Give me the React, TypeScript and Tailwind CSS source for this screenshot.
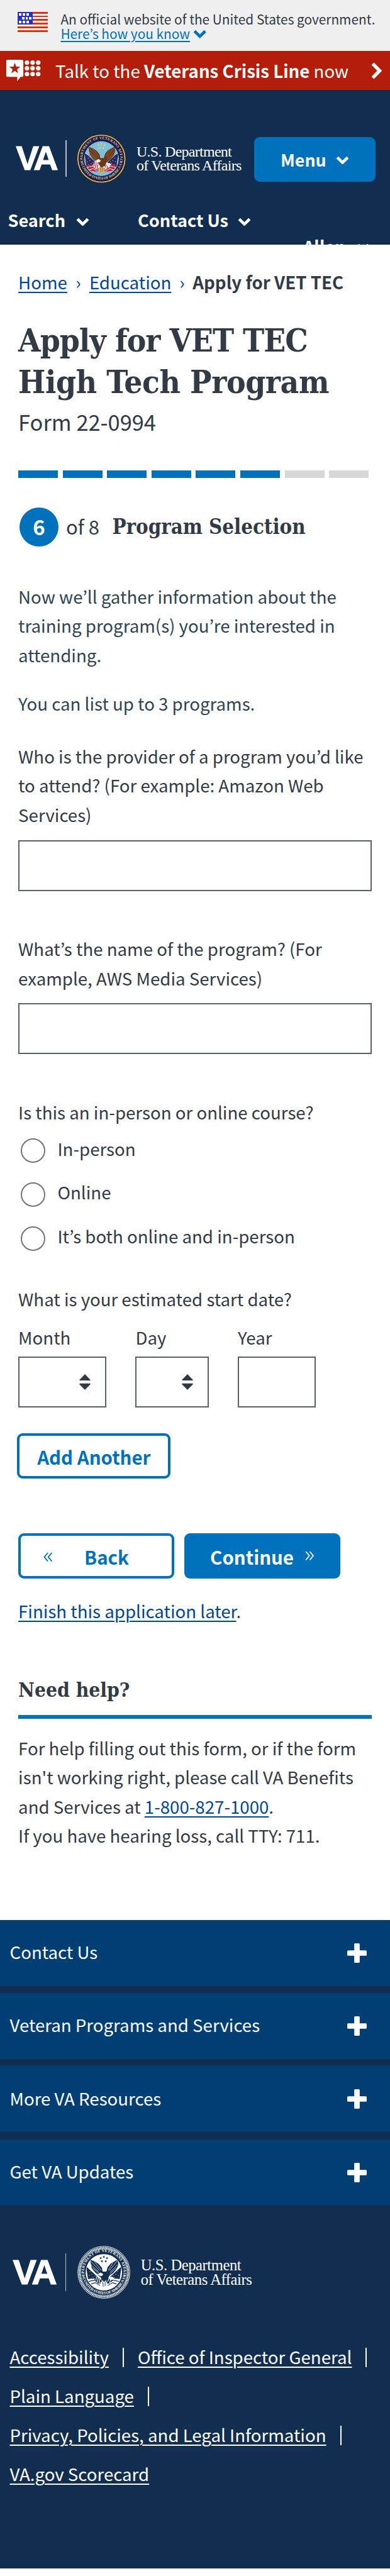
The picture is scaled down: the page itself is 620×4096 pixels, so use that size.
import { useId, type ReactNode } from "react";

const BODY = "text-[27.65px] leading-[46.5px]";

function Star({ cx, cy, r, fill }: { cx: number; cy: number; r: number; fill: string }) {
  const pts = Array.from({ length: 10 }, (_, i) => {
    const a = (Math.PI / 5) * i - Math.PI / 2;
    const rr = i % 2 ? r * 0.4 : r;
    return `${(cx + rr * Math.cos(a)).toFixed(2)},${(cy + rr * Math.sin(a)).toFixed(2)}`;
  }).join(" ");
  return <polygon points={pts} fill={fill} />;
}

function Flag() {
  return (
    <svg viewBox="0 0 50 34" className="h-[32.5px] w-[48px] shrink-0" shapeRendering="crispEdges">
      <rect width="50" height="34" fill="#fff" />
      {[0, 6, 12, 18, 24.4, 30.8].map((y) => (
        <rect key={y} y={y} width="50" height="2.8" fill="#ee2b0c" />
      ))}
      <rect width="25.5" height="21.3" fill="#2230c3" />
      {[
        [2.5, 2.6], [8.6, 2.6], [14.8, 2.6],
        [7, 8.7], [13, 8.7], [19.2, 8.7],
        [2.5, 14.8], [8.6, 14.8], [14.8, 14.8],
      ].map(([x, y]) => (
        <rect key={`${x}-${y}`} x={x} y={y} width="4" height="3.6" fill="#fff" />
      ))}
    </svg>
  );
}

function CrisisIcon() {
  return (
    <svg viewBox="0 0 57 36" className="h-[34.9px] w-[55.2px] shrink-0">
      <path d="M2 0H26a2 2 0 0 1 2 2V26a2 2 0 0 1-2 2h-2.500L18 35V28H2a2 2 0 0 1-2-2V2a2 2 0 0 1 2-2Z" fill="#fff" />
      <Star cx={14} cy={14.5} r={9.5} fill="#b31d09" />
      {[4.7, 14, 23.5].map((y) =>
        [34, 43.2, 52.4].map((x) => <circle key={`${x}-${y}`} cx={x} cy={y} r="3.7" fill="#fff" />),
      )}
    </svg>
  );
}

function Chevron({ className }: { className: string }) {
  return (
    <svg viewBox="0 0 22 14" className={className}>
      <path d="M2.300 2.400 11 10.900 19.700 2.400" fill="none" stroke="currentColor" strokeWidth="4.8" />
    </svg>
  );
}

function Seal({ mono, className }: { mono?: boolean; className: string }) {
  const id = useId();
  const ink = "#112e51";
  const c = mono
    ? { ring: ink, sky: "#fff", text: "#fff", wing: ink, wingLine: "#fff", star: ink, flag: ink, stripe: "#fff", stripeB: ink, head: "#fff", talon: "#fff", pole: "#fff" }
    : { ring: "#1d1a4b", sky: "#7fbfdc", text: "#d9cf9a", wing: "#6b3a1c", wingLine: "#9a6236", star: "#f4d34a", flag: "#28275c", stripe: "#c4202f", stripeB: "#f4eef0", head: "#f6f4f2", talon: "#eebf2a", pole: "#dfe8f0" };
  return (
    <svg viewBox="0 0 84 84" className={className}>
      <defs>
        <path id={`${id}t`} d="M13.800 54.500A31.300 31.300 0 1 1 70.200 54.500" />
        <path id={`${id}b`} d="M8.800 52.500A34.900 34.900 0 0 0 75.200 52.500" />
        <clipPath id={`${id}c`}><circle cx="42" cy="42" r="28.500" /></clipPath>
      </defs>
      <circle cx="42" cy="42" r="41" fill={c.ring} />
      {mono ? (
        <>
          <circle cx="42" cy="42" r="41.300" fill="none" stroke="#fff" strokeWidth="0.9" />
          <circle cx="42" cy="42" r="38.700" fill="none" stroke="#fff" strokeWidth="2.800" strokeDasharray="1.600 0.850" />
          <circle cx="42" cy="42" r="36.900" fill="none" stroke="#fff" strokeWidth="0.6" />
        </>
      ) : (
        <circle cx="42" cy="42" r="39" fill="none" stroke="#dcb23c" strokeWidth="2" />
      )}
      <circle cx="42" cy="42" r="28.900" fill={c.sky} />
      <g fontFamily="Liberation Serif, serif" fontWeight="700" fontSize="6.100" fill={c.text}>
        <text><textPath href={`#${id}t`} startOffset="50%" textAnchor="middle" textLength="122">DEPARTMENT OF VETERANS AFFAIRS</textPath></text>
        <text><textPath href={`#${id}b`} startOffset="50%" textAnchor="middle" textLength="82">UNITED STATES OF AMERICA</textPath></text>
      </g>
      <circle cx="9.300" cy="48" r="0.9" fill={c.text} />
      <circle cx="74.700" cy="48" r="0.9" fill={c.text} />
      <g clipPath={`url(#${id}c)`}>
        <path d="M14 33 20 36 38 51 36 60 24 57 17 54Z" fill={c.flag} />
        <path d="M70 33 64 36 47 51 49 60 60 57 67 54Z" fill={c.flag} />
        <path d="M15 53 27 52 38 58 36 64 24 62Z M69 53 57 52 46 58 48 64 60 62Z" fill={c.stripe} />
        <path d="M18 56.500 27 54.500 37 60M22 60.500 28 58.500 36 63M66 56.500 57 54.500 47 60M62 60.500 56 58.500 48 63" stroke={c.stripeB} strokeWidth="1.100" fill="none" />
        <path d="M31 46 27 54 33 60 40 56 38 48Z M52 48 56 55 50 60 44 56 46 49Z" fill={mono ? ink : "#f1ecee"} />
        <path d="M31.500 47 29 55M34 48 31.500 58M36.500 49 34.500 59M51 50 48 57M53.500 51 51 59" stroke={c.stripe} strokeWidth="1.200" />
        <path d="M15 32 38 53M69 32 47 52" stroke={c.pole} strokeWidth={mono ? 2.4 : 0.8} />
        {[[20, 41], [23, 45], [19, 47], [25, 50], [21, 52], [28, 48], [64, 41], [61, 45], [65, 47], [59, 50], [63, 52], [57, 47]].map(([x, y]) => (
          <circle key={`${x}-${y}`} cx={x} cy={y} r="0.65" fill="#e9edf4" />
        ))}
        <path d="M20 22 28 25 34 29 39 35 40 41 46 41 48 34 53 28 64 22 65 30 62 37 57 43 51 47 48 54 42 57 38 52 36 47 29 43 23 36Z" fill={c.wing} />
        <path d="M21 24 35 39M20.500 29 34 42M24 35 35 44M27 25 38 39M63 24 51 39M64.500 29 52 42M62 35 52 44M56 27 49 39" stroke={c.wingLine} strokeWidth={mono ? 0.7 : 0.9} />
        <path d="M33 45 37 42.500 41 45 39 48 35 47.500Z" fill={c.head} />
        <path d="M49 50 55 49 59 52 53 55Z" fill={c.head} />
        <path d="M38 54 42 58 46 54 45 61 47 64 42 66 38 64 39.500 60Z" fill={c.talon} />
        <path d="M40.500 57 41 65M44 57 44 64" stroke={mono ? ink : "#b3261e"} strokeWidth="0.9" />
      </g>
      {[[42, 17.5], [37, 19.5], [47, 19.5], [39, 24.5], [45, 24.5]].map(([x, y]) => (
        <Star key={`${x}-${y}`} cx={x} cy={y} r={2.3} fill={c.star} />
      ))}
    </svg>
  );
}

function NavItem({ children, w, gap }: { children: ReactNode; w: string; gap: string }) {
  return (
    <div className={`flex h-[40px] items-center text-[27.1px] font-bold text-white ${w} ${gap}`}>
      <span className="pt-[2px]">{children}</span>
      <Chevron className="mt-[6px] h-[13.5px] w-[21px]" />
    </div>
  );
}

function UpDown() {
  return (
    <svg viewBox="0 0 18 26" className="h-[25px] w-[18px]" fill="#323a45">
      <path d="M9 0 18 9.300V10.500H0V9.300Z M9 26 18 17V15.300H0V17Z" />
    </svg>
  );
}

function DateField({ label, box, arrows }: { label: string; box: string; arrows?: boolean }) {
  return (
    <label className="flex flex-col">
      <span className={BODY}>{label}</span>
      <span className={`mt-[7.4px] flex h-[81.2px] items-center justify-end border-2 border-[#5b616b] pr-[22.5px] ${box}`}>
        {arrows && <UpDown />}
      </span>
    </label>
  );
}

function Plus() {
  return (
    <svg viewBox="0 0 32 32" className="mr-[37px] h-[31px] w-[31px]" fill="#fff">
      <rect x="11.500" width="9" height="32" rx="1.600" />
      <rect y="11.500" width="32" height="9" rx="1.600" />
    </svg>
  );
}

function DoubleAngle({ flip }: { flip?: boolean }) {
  return (
    <svg viewBox="0 0 15 16" className={`h-[15.5px] w-[14.5px] ${flip ? "mt-[3px] -scale-x-100" : ""}`}>
      <path d="M1.200 1 7 8 1.200 15M7.700 1 13.500 8 7.700 15" fill="none" stroke="currentColor" strokeWidth="1.900" />
    </svg>
  );
}

const steps = [1, 2, 3, 4, 5, 6, 7, 8];
const link = "underline decoration-[2px] underline-offset-[4px]";

export default function App() {
  return (
    <div className="h-[4096px] w-[620px] overflow-hidden bg-white font-['Noto_Sans_CJK_KR',sans-serif] text-[27.65px] whitespace-nowrap text-[#323a45]">
      <div className="flex h-[81.4px] bg-[#f0f0f0] pt-[19.4px] pl-[28.4px]">
        <Flag />
        <div className="-mt-[0.5px] ml-[20px] text-[20.84px] leading-[23px]">
          <p>An official website of the United States government.</p>
          <p className="flex items-center text-[#0071bc]">
            <span className="underline decoration-[2px] underline-offset-[3px]">Here’s how you know</span>
            <Chevron className="mt-[2px] ml-[4.5px] h-[14px] w-[21.5px]" />
          </p>
        </div>
      </div>

      <div className="flex h-[62px] items-center bg-[#b31d09] pl-[9.5px] text-white">
        <CrisisIcon />
        <p className="ml-[23.4px] pt-[1px]">
          Talk to the <b>Veterans Crisis Line</b> now
        </p>
        <svg viewBox="0 0 18 28" className="mr-[12.5px] ml-auto h-[27px] w-[17.5px]">
          <path d="M2.600 2.500 14 14 2.600 25.500" fill="none" stroke="#fff" strokeWidth="5.600" />
        </svg>
      </div>

      <header className="h-[245.3px] overflow-hidden bg-[#112e51] text-white">
        <div className="mt-[69px] flex h-[79px] items-center">
          <div className="w-[104px] pl-[25.5px] font-['Liberation_Sans',sans-serif] text-[54.5px] leading-[56px] font-bold tracking-[-4.5px] [-webkit-text-stroke:1.2px_white]">VA</div>
          <div className="h-[58px] w-[1.5px] bg-white/70" />
          <Seal className="ml-[15.5px] h-[80.5px] w-[80.5px] shrink-0" />
          <div className="ml-[15.5px] w-[186.5px] font-['Liberation_Serif',serif] text-[24px] leading-[22px] tracking-[-0.73px]">
            <p>U.S. Department</p>
            <p>of Veterans Affairs</p>
          </div>
          <div className="mt-[3px] flex h-[71.7px] w-[193.8px] items-center rounded-[9px] bg-[#0071bc] pl-[42.5px] font-bold">
            <span className="w-[88px] pt-[2px] text-[26.8px]">Menu</span>
            <Chevron className="mt-[2px] h-[13.5px] w-[21px]" />
          </div>
        </div>
        <div className="mt-[37.9px] flex pl-[12.6px]">
          <NavItem w="w-[206.5px]" gap="gap-[17.5px]">Search</NavItem>
          <NavItem w="w-[240px]" gap="gap-[15.5px]">Contact Us</NavItem>
        </div>
        <div className="mt-[1.7px] flex pl-[482px]">
          <NavItem w="w-[138px]" gap="gap-[17px]">Allen</NavItem>
        </div>
      </header>

      <main className="flow-root px-[29.1px]">
        <nav className="mt-[39.5px] flex h-[40px] leading-[40px] text-[#004795]">
          <a className={link}>Home</a>
          <span className="w-[35px] text-center">›</span>
          <a className={link}>Education</a>
          <span className="w-[34px] text-center">›</span>
          <b className="text-[#323a45]">Apply for VET TEC</b>
        </nav>

        <h1 className="mt-[41.2px] font-['DejaVu_Serif_Condensed','DejaVu_Serif',serif] text-[51px] leading-[65.9px] font-bold">
          <span className="block tracking-[-1px]">Apply for VET TEC</span>
          <span className="block tracking-[-0.4px]">High Tech Program</span>
        </h1>
        <p className="mt-[8.9px] text-[34.43px] leading-[40px]">Form 22-0994</p>

        <div className="mt-[58.4px] flex h-[11.6px] gap-[7.6px]">
          {steps.map((s) => (
            <div key={s} className={s <= 6 ? "w-[63px] bg-[#0071bc]" : "w-[63px] bg-[#d6d7d9]"} />
          ))}
        </div>

        <div className="mt-[46.5px] flex h-[62px] items-center">
          <span className="ml-[1.8px] flex h-[62px] w-[62px] items-center justify-center rounded-full bg-[#0071bc] text-[33px] font-bold text-white">6</span>
          <span className="ml-[12px] text-[31px]">of 8</span>
          <h2 className="ml-[20.5px] font-['DejaVu_Serif_Condensed','DejaVu_Serif',serif] text-[32.7px] font-bold">Program Selection</h2>
        </div>

        <div className={`mt-[56.4px] text-[#2e4453] ${BODY}`}>
          <p>Now we’ll gather information about the<br />training program(s) you’re interested in<br />attending.</p>
          <p className="mt-[31px]">You can list up to 3 programs.</p>
        </div>

        <p className={`mt-[37px] ${BODY}`}>
          Who is the provider of a program you’d like<br />to attend? (For example: Amazon Web<br />Services)
        </p>
        <div className="mt-[17.1px] h-[81.3px] w-[561.9px] border-2 border-[#5b616b]" />

        <p className={`mt-[68.3px] ${BODY}`}>
          What’s the name of the program? (For<br />example, AWS Media Services)
        </p>
        <div className="mt-[17.1px] h-[81.2px] w-[561.9px] border-2 border-[#5b616b]" />

        <p className={`mt-[68.3px] ${BODY}`}>Is this an in-person or online course?</p>
        <div className="mt-[3.9px]">
          {["In-person", "Online", "It’s both online and in-person"].map((t) => (
            <label key={t} className="flex h-[69.6px] items-center pl-[3.9px]">
              <span className="h-[39px] w-[39px] rounded-full border-2 border-[#757575]" />
              <span className="ml-[19.5px] pb-[7px]">{t}</span>
            </label>
          ))}
        </div>

        <p className={`mt-[37.9px] ${BODY}`}>What is your estimated start date?</p>
        <div className="mt-[15.1px] flex">
          <div className="w-[186.3px]"><DateField label="Month" box="w-[139.5px]" arrows /></div>
          <div className="w-[162.5px]"><DateField label="Day" box="w-[116.5px]" arrows /></div>
          <DateField label="Year" box="w-[124px]" />
        </div>

        <button className="mt-[40.9px] -ml-[1.8px] flex h-[71.9px] w-[244px] items-center justify-center rounded-[9px] border-4 border-[#0071bc] pt-[2px] text-[29.47px] font-bold text-[#0071bc]">
          Add Another
        </button>

        <div className="mt-[87.2px] flex gap-[15.5px] text-[29.47px] font-bold">
          <button className="flex h-[71.5px] w-[248px] items-center rounded-[9px] border-4 border-[#0071bc] pl-[35.5px] text-[#0071bc]">
            <span className="flex w-[65.5px]"><DoubleAngle flip /></span>
            <span className="pt-[2px]">Back</span>
          </button>
          <button className="flex h-[71.5px] w-[248px] items-center rounded-[9px] bg-[#0071bc] pl-[41.5px] text-white">
            <span className="w-[151px] pt-[2px] text-left">Continue</span>
            <DoubleAngle />
          </button>
        </div>

        <p className={`mt-[27.7px] ${BODY}`}><a className={`text-[#004795] ${link}`}>Finish this application later</a>.</p>

        <h2 className="mt-[82.8px] font-['DejaVu_Serif_Condensed','DejaVu_Serif',serif] text-[31.47px] leading-[40px] font-bold">Need help?</h2>
        <div className="mt-[20.3px] h-[5.8px] w-[561.9px] bg-[#0071bc]" />
        <p className={`mt-[22.8px] ${BODY}`}>
          For help filling out this form, or if the form<br />isn't working right, please call VA Benefits<br />and Services at{" "}
          <a className={`text-[#004795] ${link}`}>1-800-827-1000</a>.<br />If you have hearing loss, call TTY: 711.
        </p>
      </main>

      <footer className="mt-[111.1px] flow-root h-[1030.9px] bg-[#112e51] text-white">
        <div className="flex flex-col gap-[11.6px]">
          {["Contact Us", "Veteran Programs and Services", "More VA Resources", "Get VA Updates"].map((t) => (
            <div key={t} className="flex h-[104.7px] items-center justify-between bg-[#003e73] pl-[15.5px]">
              <span className="pb-[3px]">{t}</span>
              <Plus />
            </div>
          ))}
        </div>
        <div className="mt-[64.6px] flex h-[84.2px] items-center">
          <div className="w-[103.5px] pl-[20.5px] font-['Liberation_Sans',sans-serif] text-[56px] leading-[58px] font-bold tracking-[-3.5px] [-webkit-text-stroke:1.2px_white]">VA</div>
          <div className="h-[60px] w-[1.5px] bg-white/70" />
          <Seal mono className="ml-[17.5px] h-[84.2px] w-[84.2px] shrink-0" />
          <div className="ml-[17px] font-['Liberation_Serif',serif] text-[24.6px] leading-[23.6px] tracking-[-0.43px]">
            <p>U.S. Department</p>
            <p>of Veterans Affairs</p>
          </div>
        </div>
        <div className="mt-[61.2px] pl-[15.5px] leading-[62px]">
          {[["Accessibility", "Office of Inspector General"], ["Plain Language"], ["Privacy, Policies, and Legal Information"], ["VA.gov Scorecard"]].map((row, i) => (
            <div key={i} className="flex items-center">
              {row.map((t) => (
                <span key={t} className="flex items-center">
                  <a className={link}>{t}</a>
                  {i < 3 && <span className="mt-[2px] mr-[22px] ml-[22px] h-[31px] w-[2px] bg-white" />}
                </span>
              ))}
            </div>
          ))}
        </div>
      </footer>
    </div>
  );
}
